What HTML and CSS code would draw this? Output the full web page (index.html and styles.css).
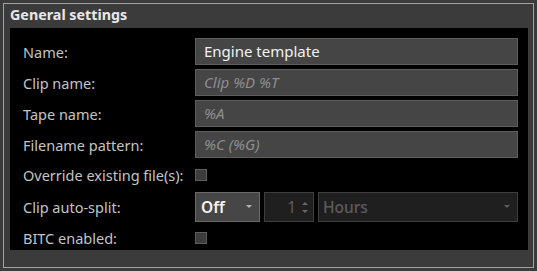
FILE: index.html
```html
<!DOCTYPE html>
<html lang="en">
<head>
<meta charset="UTF-8">
<title>General settings</title>
<link rel="stylesheet" href="styles.css">
</head>
<body>
<div class="frame">
	<div class="title">General settings</div>
	<div class="panel">
		<div class="row">
			<label class="lbl">Name:</label>
			<div class="field">Engine template</div>
		</div>
		<div class="row">
			<label class="lbl">Clip name:</label>
			<div class="field ph">Clip %D %T</div>
		</div>
		<div class="row">
			<label class="lbl">Tape name:</label>
			<div class="field ph">%A</div>
		</div>
		<div class="row">
			<label class="lbl">Filename pattern:</label>
			<div class="field ph">%C (%G)</div>
		</div>
		<div class="row short">
			<label class="lbl">Override existing file(s):</label>
			<div class="check"></div>
		</div>
		<div class="row tall">
			<label class="lbl">Clip auto-split:</label>
			<div class="combos">
				<div class="combo">Off<span class="arrow"></span></div>
				<div class="spin">1<span class="spinarrows"><span class="up"></span><span class="down"></span></span></div>
				<div class="combo off">Hours<span class="arrow"></span></div>
			</div>
		</div>
		<div class="row last">
			<label class="lbl">BITC enabled:</label>
			<div class="check"></div>
		</div>
	</div>
</div>
</body>
</html>
```

FILE: styles.css
```css
html, body {
	margin: 0;
	background: #3b3b3b;
	font-family: "Noto Sans", "Open Sans", sans-serif;
}
.frame {
	margin: 3px;
	width: 529px;
	height: 263px;
	border: 1px solid #a3a3a3;
	display: flex;
	flex-direction: column;
}
.title {
	height: 24px;
	line-height: 22px;
	padding-left: 6px;
	font-size: 14.3px;
	font-weight: bold;
	color: #e8e8e8;
}
.panel {
	margin: 0 5px 0 6px;
	height: 212px;
	background: #000;
	padding: 10px 10px 0 13px;
}
.row {
	display: flex;
	align-items: center;
	height: 27px;
	margin-bottom: 4px;
}
.row.short { height: 26px; }
.row.tall { height: 30px; }
.row.last { height: 24px; }
.lbl {
	width: 172px;
	flex: none;
	font-size: 14.5px;
	color: #c4c4c4;
}
.field {
	flex: 1;
	box-sizing: border-box;
	height: 27px;
	line-height: 25px;
	padding-left: 8px;
	background: #454545;
	border: 1px solid #5e5e5e;
	font-size: 15px;
	color: #f2f2f2;
}
.field.ph {
	font-style: italic;
	color: #8e8e8e;
}
.check {
	width: 10px;
	height: 10px;
	background: #3c3c3c;
	border: 1px solid #5e5e5e;
}
.combos {
	flex: 1;
	display: flex;
	gap: 4px;
	height: 30px;
}
.combo {
	position: relative;
	box-sizing: border-box;
	width: 65px;
	height: 30px;
	line-height: 28px;
	padding-left: 5px;
	background: #464646;
	border: 1px solid #6a6a6a;
	font-size: 15.5px;
	font-weight: 600;
	color: #f4f4f4;
}
.combo.off {
	flex: 1;
	background: #1f1f1f;
	border-color: #3e3e3e;
	color: #5c5c5c;
	font-weight: 500;
	padding-left: 4px;
}
.arrow {
	position: absolute;
	right: 7px;
	top: 12px;
	border-left: 3px solid transparent;
	border-right: 3px solid transparent;
	border-top: 3px solid #b4b4b4;
}
.combo.off .arrow { border-top-color: #5e5e5e; }
.spin {
	box-sizing: border-box;
	width: 50px;
	height: 30px;
	line-height: 28px;
	background: #1f1f1f;
	border: 1px solid #3e3e3e;
	font-size: 15.5px;
	color: #5e5e5e;
	display: flex;
	justify-content: flex-end;
	gap: 6px;
	padding-right: 5px;
}
.spinarrows {
	display: flex;
	flex-direction: column;
	justify-content: center;
	gap: 5px;
}
.spinarrows .up {
	border-left: 3px solid transparent;
	border-right: 3px solid transparent;
	border-bottom: 3px solid #686868;
}
.spinarrows .down {
	border-left: 3px solid transparent;
	border-right: 3px solid transparent;
	border-top: 3px solid #686868;
}
```
